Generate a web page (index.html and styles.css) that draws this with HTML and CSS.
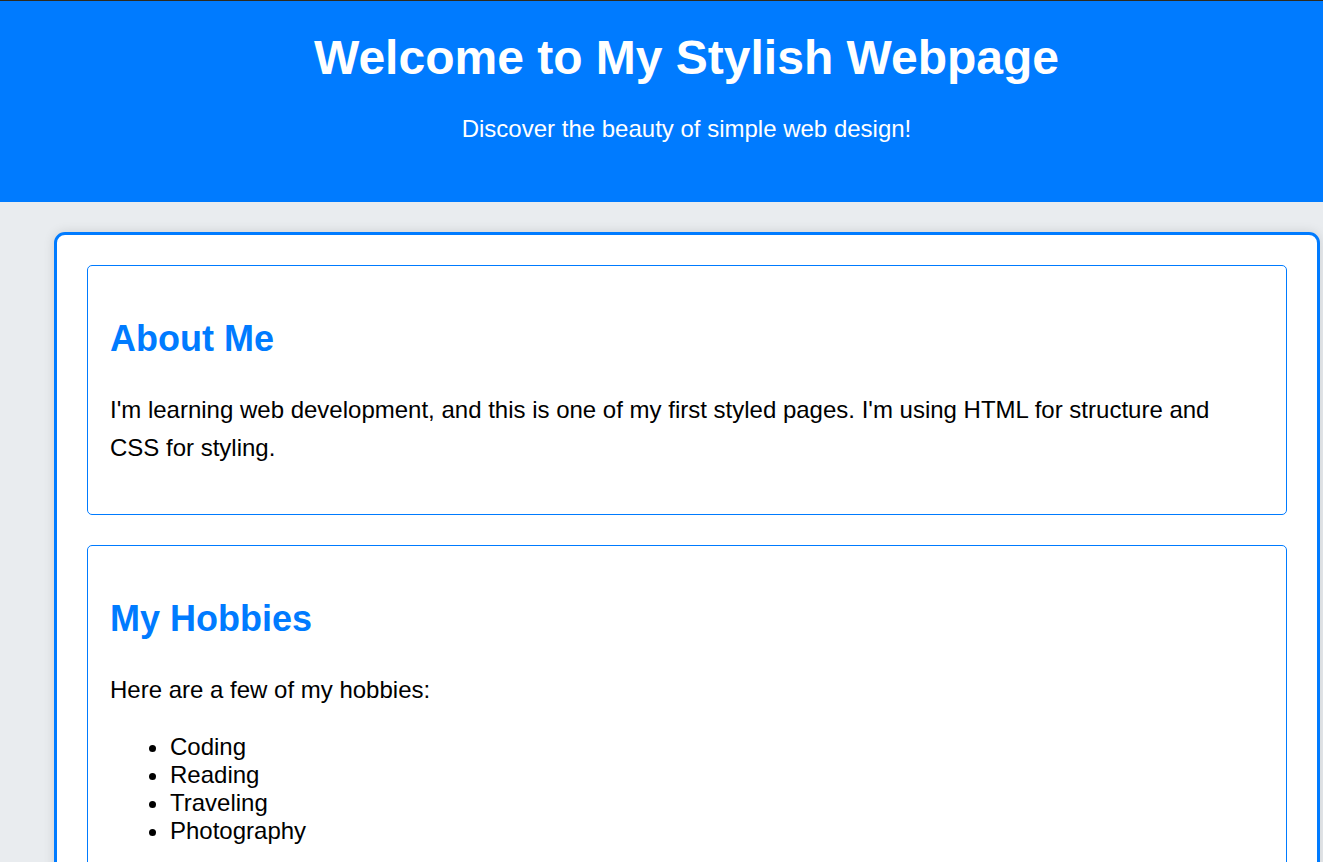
FILE: index.html
```html
<!DOCTYPE html>
<html lang="en">
<head>
<meta charset="utf-8">
<title>My Stylish Webpage</title>
<link rel="stylesheet" href="styles.css">
</head>
<body>
<header class="site-header">
  <h1 class="site-title">Welcome to My Stylish Webpage</h1>
  <p class="site-subtitle">Discover the beauty of simple web design!</p>
</header>
<main class="container">
  <section class="card">
    <h2 class="card-title">About Me</h2>
    <p class="card-text">I'm learning web development, and this is one of my first styled pages. I'm using HTML for structure and CSS for styling.</p>
  </section>
  <section class="card">
    <h2 class="card-title">My Hobbies</h2>
    <p class="card-text">Here are a few of my hobbies:</p>
    <ul class="hobby-list">
      <li>Coding</li>
      <li>Reading</li>
      <li>Traveling</li>
      <li>Photography</li>
    </ul>
  </section>
</main>
</body>
</html>
```

FILE: styles.css
```css
* {
  box-sizing: border-box;
}

html, body {
  margin: 0;
  padding: 0;
}

body {
  font-family: "Liberation Sans", Arial, sans-serif;
  background: #e9ecef;
  color: #000;
  border-top: 1px solid #2e2a1e;
}

.site-header {
  background: #007bff;
  color: #fff;
  text-align: center;
  padding: 29px 0 55px 50px;
}

.site-title {
  margin: 0 0 26px;
  font-size: 48px;
  font-weight: bold;
  line-height: normal;
}

.site-subtitle {
  margin: 0;
  font-size: 24px;
  line-height: 36px;
}

.container {
  width: 1266px;
  margin: 30px 0 40px 54px;
  background: #fff;
  border: 3px solid #007bff;
  border-radius: 11px;
  padding: 30px;
  box-shadow: 0 0 12px rgba(0, 0, 0, 0.12);
}

.card {
  border: 1px solid #007bff;
  border-radius: 5px;
  padding: 20px 40px 20px 22px;
  margin-bottom: 30px;
}

.card:last-child {
  margin-bottom: 0;
}

.card-title {
  margin: 32px 0 31px;
  color: #007bff;
  font-size: 36px;
  font-weight: bold;
  line-height: normal;
}

.card-text {
  margin: 0 0 26px;
  font-size: 24px;
  line-height: 38.4px;
}

.hobby-list {
  margin: -2px 0 30px;
  padding-left: 60px;
  font-size: 24px;
  line-height: normal;
}
```
